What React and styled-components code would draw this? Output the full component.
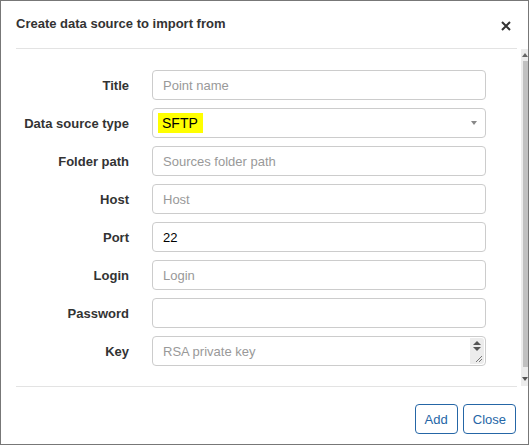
import React from 'react';
import styled, { createGlobalStyle } from 'styled-components';

const fields = [
  { label: 'Title', placeholder: 'Point name' },
  { label: 'Data source type', select: 'SFTP' },
  { label: 'Folder path', placeholder: 'Sources folder path' },
  { label: 'Host', placeholder: 'Host' },
  { label: 'Port', value: '22' },
  { label: 'Login', placeholder: 'Login' },
  { label: 'Password', value: '' },
  { label: 'Key', placeholder: 'RSA private key', textarea: true },
];

export default function App() {
  return (
    <Window>
      <GlobalStyle />
      <Header>
        <Title>Create data source to import from</Title>
        <CloseX>
          <svg width="10" height="10" viewBox="0 0 10 10">
            <path d="M1 1L9 9M9 1L1 9" stroke="#333" strokeWidth="2" />
          </svg>
        </CloseX>
      </Header>
      <Body>
        <Form>
          {fields.map((f) => (
            <Row key={f.label}>
              <Label>{f.label}</Label>
              {f.select ? (
                <Field>
                  <Highlight>{f.select}</Highlight>
                  <Caret />
                </Field>
              ) : f.textarea ? (
                <Field>
                  <Placeholder>{f.placeholder}</Placeholder>
                  <AreaBar>
                    <Spin>
                      <Tri up />
                      <Tri />
                    </Spin>
                    <Grip>
                      <svg width="8" height="8" viewBox="0 0 8 8">
                        <path d="M1 7L7 1M4 7L7 4" stroke="#777" strokeWidth="1" />
                      </svg>
                    </Grip>
                  </AreaBar>
                </Field>
              ) : (
                <Field>
                  {f.placeholder ? <Placeholder>{f.placeholder}</Placeholder> : <Value>{f.value}</Value>}
                </Field>
              )}
            </Row>
          ))}
        </Form>
        <Scrollbar>
          <Arrow up />
          <Thumb />
          <Arrow />
        </Scrollbar>
      </Body>
      <Footer>
        <Button>Add</Button>
        <Button>Close</Button>
      </Footer>
    </Window>
  );
}

const GlobalStyle = createGlobalStyle`
  body {
    margin: 0;
    font-family: "Liberation Sans", Arial, sans-serif;
    font-size: 13px;
    color: #333;
    background: #fff;
  }
`;

const Window = styled.div`
  width: 529px;
  height: 445px;
  box-sizing: border-box;
  border: 1px solid #777;
  display: flex;
  flex-direction: column;
`;

const Header = styled.div`
  height: 48px;
  margin: 0 11px 0 15px;
  box-sizing: border-box;
  border-bottom: 1px solid #e3e3e3;
  display: flex;
  align-items: center;
  justify-content: space-between;
  padding-bottom: 2px;
`;

const Title = styled.div`
  font-weight: bold;
  font-size: 13px;
  color: #333;
`;

const CloseX = styled.div`
  display: flex;
  margin-right: 6px;
  margin-top: 4px;
`;

const Body = styled.div`
  height: 337px;
  display: flex;
`;

const Form = styled.div`
  flex: 1;
  padding: 21px 0 0 15px;
  display: flex;
  flex-direction: column;
  gap: 8px;
`;

const Row = styled.div`
  display: grid;
  grid-template-columns: 113px 334px;
  column-gap: 23px;
  align-items: center;
`;

const Label = styled.div`
  text-align: right;
  font-weight: bold;
  color: #333;
`;

const Field = styled.div`
  position: relative;
  height: 30px;
  box-sizing: border-box;
  border: 1px solid #ccc;
  border-radius: 4px;
  padding: 0 10px;
  display: flex;
  align-items: center;
`;

const Placeholder = styled.span`
  color: #999;
`;

const Value = styled.span`
  color: #000;
`;

const Highlight = styled.span`
  background: #ffff00;
  color: #000;
  margin-left: -5px;
  padding: 2px 5px 2px 4px;
  font-size: 14px;
`;

const Caret = styled.span`
  position: absolute;
  right: 8px;
  top: 12px;
  border-left: 3.5px solid transparent;
  border-right: 3.5px solid transparent;
  border-top: 4px solid #888;
`;

const AreaBar = styled.div`
  position: absolute;
  right: 1px;
  top: 1px;
  bottom: 1px;
  width: 14px;
  background: #ececec;
  display: flex;
  flex-direction: column;
  justify-content: space-between;
  align-items: center;
  border-radius: 0 3px 3px 0;
`;

const Spin = styled.div`
  display: flex;
  flex-direction: column;
  gap: 2px;
  padding-top: 3px;
`;

const Tri = styled.span`
  border-left: 4px solid transparent;
  border-right: 4px solid transparent;
  ${(p) => (p.up ? 'border-bottom: 4px solid #555;' : 'border-top: 4px solid #555;')}
`;

const Grip = styled.div`
  display: flex;
  align-self: flex-end;
  padding: 0 1px 1px 0;
`;

const Scrollbar = styled.div`
  width: 7px;
  background: #ececec;
  display: flex;
  flex-direction: column;
  align-items: flex-end;
  padding: 4px 0 5px;
  box-sizing: border-box;
`;

const Thumb = styled.div`
  flex: 1;
  width: 5px;
  background: #c1c1c1;
  margin: 4px 0 10px;
`;

const Arrow = styled.span`
  border-left: 3px solid transparent;
  border-right: 3px solid transparent;
  ${(p) => (p.up ? 'border-bottom: 4px solid #666;' : 'border-top: 4px solid #555;')}
`;

const Footer = styled.div`
  margin: 0 11px 0 15px;
  border-top: 1px solid #e3e3e3;
  padding: 17px 1px 0 0;
  display: flex;
  justify-content: flex-end;
  gap: 5px;
`;

const Button = styled.button`
  height: 30px;
  padding: 0 9px;
  background: #fff;
  border: 1px solid #2566a6;
  border-radius: 4px;
  color: #2566a6;
  font-family: "Liberation Sans", Arial, sans-serif;
  font-size: 13px;
`;
